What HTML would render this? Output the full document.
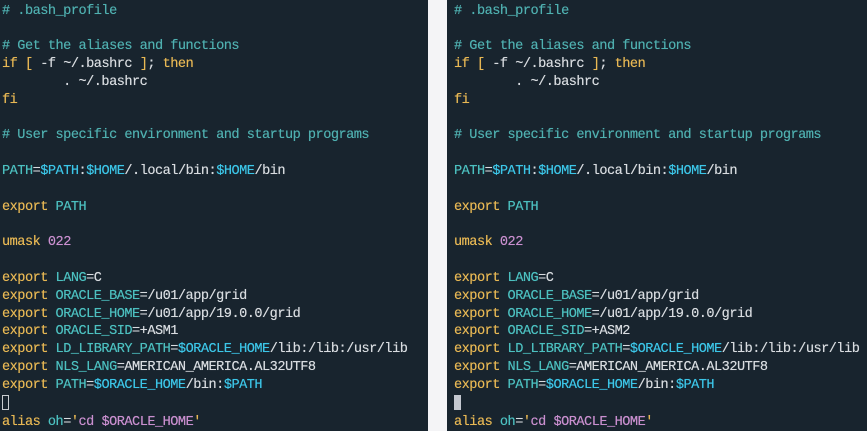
<!DOCTYPE html>
<html><head><style>
body{margin:0;width:867px;height:431px;background:#f4f4f6;overflow:hidden;position:relative}
.p{position:absolute;top:0;height:431px;background:#18242e;overflow:hidden}
pre{margin:0;position:absolute;top:2.5px;font-family:"Liberation Mono",monospace;font-size:13.6px;letter-spacing:-0.51px;line-height:17.83px;color:#d8dce0;text-shadow:0 0 0.4px currentColor}
.c{color:#4fb0b0}.y{color:#e8b854}.t{color:#4cc0c0}.v{color:#3cc6e8}.m{color:#c98fcf}
.cur{display:inline-block;width:7px;height:15px;vertical-align:-3px}
</style></head><body>
<div class="p" style="left:0;width:428px"><pre style="left:2px"><span class="c"># .bash_profile</span>

<span class="c"># Get the aliases and functions</span>
<span class="y">if</span> <span class="y">[</span> -f ~/.bashrc <span class="y">]</span>; <span class="y">then</span>
        . ~/.bashrc
<span class="y">fi</span>

<span class="c"># User specific environment and startup programs</span>

<span class="t">PATH</span>=<span class="v">$PATH</span>:<span class="v">$HOME</span>/.local/bin:<span class="v">$HOME</span>/bin

<span class="y">export</span> <span class="t">PATH</span>

<span class="y">umask</span> <span class="m">022</span>

<span class="y">export</span> <span class="t">LANG</span>=C
<span class="y">export</span> <span class="t">ORACLE_BASE</span>=/u01/app/grid
<span class="y">export</span> <span class="t">ORACLE_HOME</span>=/u01/app/19.0.0/grid
<span class="y">export</span> <span class="t">ORACLE_SID</span>=+ASM1
<span class="y">export</span> <span class="t">LD_LIBRARY_PATH</span>=<span class="v">$ORACLE_HOME</span>/lib:/lib:/usr/lib
<span class="y">export</span> <span class="t">NLS_LANG</span>=AMERICAN_AMERICA.AL32UTF8
<span class="y">export</span> <span class="t">PATH</span>=<span class="v">$ORACLE_HOME</span>/bin:<span class="v">$PATH</span>
<span class="cur" style="border:1px solid #c8ccd0;box-sizing:border-box"></span>
<span class="y">alias</span> <span class="t">oh</span>=<span class="y">'</span><span class="m">cd $ORACLE_HOME</span><span class="y">'</span></pre></div>
<div class="p" style="left:447px;width:420px"><pre style="left:7px"><span class="c"># .bash_profile</span>

<span class="c"># Get the aliases and functions</span>
<span class="y">if</span> <span class="y">[</span> -f ~/.bashrc <span class="y">]</span>; <span class="y">then</span>
        . ~/.bashrc
<span class="y">fi</span>

<span class="c"># User specific environment and startup programs</span>

<span class="t">PATH</span>=<span class="v">$PATH</span>:<span class="v">$HOME</span>/.local/bin:<span class="v">$HOME</span>/bin

<span class="y">export</span> <span class="t">PATH</span>

<span class="y">umask</span> <span class="m">022</span>

<span class="y">export</span> <span class="t">LANG</span>=C
<span class="y">export</span> <span class="t">ORACLE_BASE</span>=/u01/app/grid
<span class="y">export</span> <span class="t">ORACLE_HOME</span>=/u01/app/19.0.0/grid
<span class="y">export</span> <span class="t">ORACLE_SID</span>=+ASM2
<span class="y">export</span> <span class="t">LD_LIBRARY_PATH</span>=<span class="v">$ORACLE_HOME</span>/lib:/lib:/usr/lib
<span class="y">export</span> <span class="t">NLS_LANG</span>=AMERICAN_AMERICA.AL32UTF8
<span class="y">export</span> <span class="t">PATH</span>=<span class="v">$ORACLE_HOME</span>/bin:<span class="v">$PATH</span>
<span class="cur" style="background:#c4c8d0"></span>
<span class="y">alias</span> <span class="t">oh</span>=<span class="y">'</span><span class="m">cd $ORACLE_HOME</span><span class="y">'</span></pre></div>
</body></html>
